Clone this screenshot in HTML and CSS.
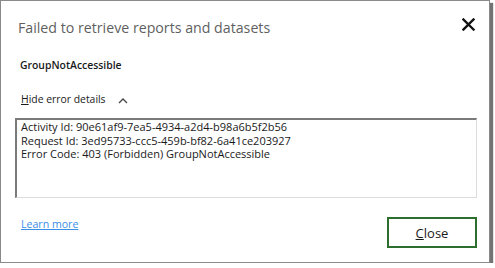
FILE: index.html
```html
<!DOCTYPE html>
<html lang="en">
<head>
  <meta charset="UTF-8">
  <title>Failed to retrieve reports and datasets</title>
  <link rel="stylesheet" href="styles.css">
</head>
<body>

<div class="dialog">
  <div class="dialog-head">
    <h1 class="title">Failed to retrieve reports and datasets</h1>
    <button class="close-x" aria-label="Close">
      <svg width="13" height="13" viewBox="0 0 13 13">
        <path d="M1.5 1.5 L11.5 11.5 M11.5 1.5 L1.5 11.5" stroke="#111" stroke-width="2.4" stroke-linecap="square"/>
      </svg>
    </button>
  </div>

  <div class="error-name">GroupNotAccessible</div>

  <div class="toggle">
    <span><u>H</u>ide error details</span>
    <svg class="chevron" width="10" height="6" viewBox="0 0 10 6">
      <path d="M1 5 L5 1 L9 5" fill="none" stroke="#444" stroke-width="1.3"/>
    </svg>
  </div>

  <div class="details">
    <div>Activity Id: 90e61af9-7ea5-4934-a2d4-b98a6b5f2b56</div>
    <div>Request Id: 3ed95733-ccc5-459b-bf82-6a41ce203927</div>
    <div>Error Code: 403 (Forbidden) GroupNotAccessible</div>
  </div>

  <div class="dialog-foot">
    <a href="#" class="learn-more">Learn more</a>
    <button class="btn-close"><u>C</u>lose</button>
  </div>
</div>

</body>
</html>
```

FILE: styles.css
```css
:root {
  --text: #1a1a1a;
  --muted: #5f5f5f;
  --link: #3a8ee6;
  --green: #2b6e2d;
}
body {
  margin: 0;
  padding: 0;
  background: white;
  font-family: "Open Sans", "Noto Sans", sans-serif;
  color: var(--text);
}
.dialog {
  width: 490px;
  height: 263px;
  border: 1px solid #8a8a8a;
  background: white;
  box-shadow: 3px 3px 1px rgba(0,0,0,0.55);
  display: flex;
  flex-direction: column;
  padding: 0 0 0 14px;
  box-sizing: border-box;
}
.dialog-head {
  display: flex;
  justify-content: space-between;
  align-items: flex-start;
  height: 54px;
  padding: 17px 14px 0 3px;
  box-sizing: border-box;
}
.title {
  margin: 0;
  font-weight: normal;
  font-size: 14.2px;
  line-height: 20px;
  color: var(--muted);
}
.close-x {
  border: none;
  background: none;
  padding: 0;
  display: flex;
}
.error-name {
  font-weight: 600;
  font-size: 10.4px;
  padding-left: 5px;
  height: 20px;
  line-height: 20px;
}
.toggle {
  display: flex;
  align-items: center;
  gap: 12px;
  font-size: 10.4px;
  padding-left: 6px;
  margin-top: 15px;
  height: 18px;
}
.toggle u {
  text-decoration-thickness: 1px;
}
.chevron {
  margin-top: 3px;
}
.details {
  margin-top: 10px;
  width: 462px;
  height: 80px;
  box-sizing: border-box;
  border-top: 2px solid #7a7a7a;
  border-left: 2px solid #7a7a7a;
  border-right: 1px solid #dcdcdc;
  border-bottom: 1px solid #dcdcdc;
  padding: 0 4px;
  font-size: 11px;
  line-height: 13.5px;
}
.dialog-foot {
  display: flex;
  justify-content: space-between;
  align-items: flex-start;
  margin-top: 19px;
  padding-left: 6px;
  width: 462px;
  box-sizing: border-box;
}
.learn-more {
  color: var(--link);
  font-size: 10.6px;
}
.btn-close {
  width: 90px;
  height: 31px;
  border: 2px solid var(--green);
  background: white;
  font-family: inherit;
  font-size: 13px;
  color: var(--text);
  padding: 0;
}
```
